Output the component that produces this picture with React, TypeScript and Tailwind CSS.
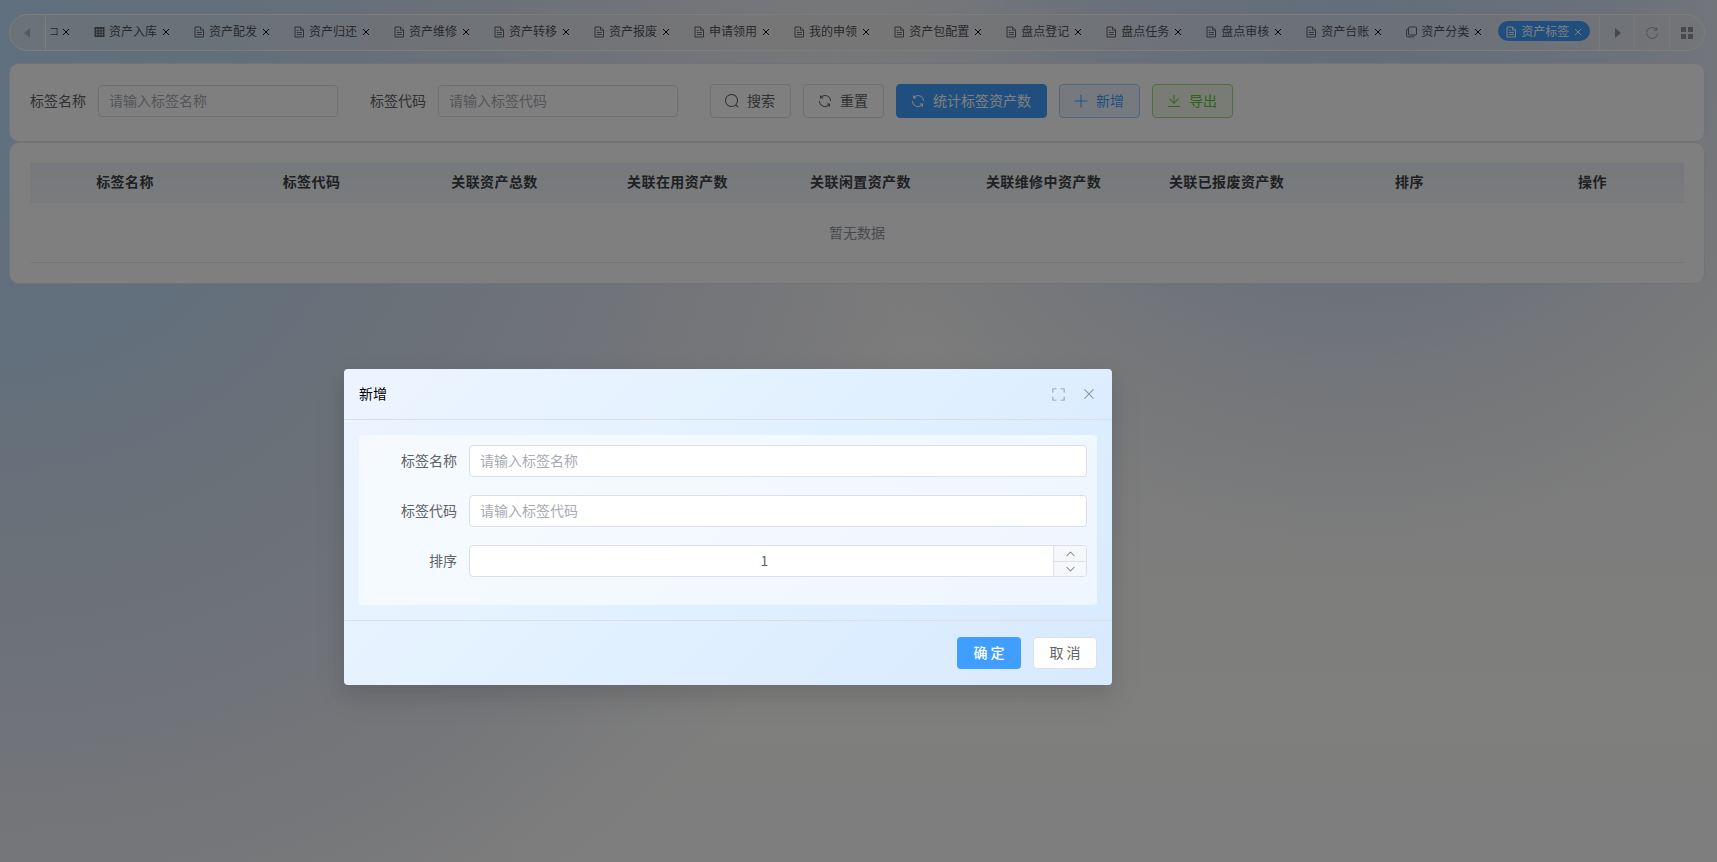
import React from "react";

type IconProps = { d: string[]; className?: string };
const Icon = ({ d, className = "" }: IconProps) => (
  <svg viewBox="0 0 1024 1024" fill="currentColor" className={`shrink-0 ${className}`}>
    {d.map((p) => (
      <path key={p} d={p} />
    ))}
  </svg>
);

const REFRESH = [
  "M784.512 230.272v-50.56a32 32 0 1 1 64 0v149.056a32 32 0 0 1-32 32H667.52a32 32 0 1 1 0-64h92.992A320 320 0 1 0 524.8 833.152a320 320 0 0 0 320-320h64a384 384 0 0 1-384 384 384 384 0 0 1-384-384 384 384 0 0 1 643.712-282.88z",
];
const SWITCH = [
  "M771.776 794.88A384 384 0 0 1 128 512h64a320 320 0 0 0 555.712 216.448H654.72a32 32 0 1 1 0-64h149.056a32 32 0 0 1 32 32v148.928a32 32 0 1 1-64 0v-50.56zM276.288 295.616h92.992a32 32 0 0 1 0 64H220.16a32 32 0 0 1-32-32V178.56a32 32 0 0 1 64 0v50.56A384 384 0 0 1 896.128 512h-64a320 320 0 0 0-555.776-216.384z",
];
const SEARCH = [
  "m795.904 750.72 124.992 124.928a32 32 0 0 1-45.248 45.248L750.656 795.904a416 416 0 1 1 45.248-45.248zM480 832a352 352 0 1 0 0-704 352 352 0 0 0 0 704z",
];
const PLUS = [
  "M480 480V128a32 32 0 0 1 64 0v352h352a32 32 0 1 1 0 64H544v352a32 32 0 1 1-64 0V544H128a32 32 0 0 1 0-64h352z",
];
const DOWNLOAD = [
  "M160 832h704a32 32 0 1 1 0 64H160a32 32 0 1 1 0-64zm384-253.696 236.288-236.352 45.248 45.248L508.8 704 192 387.2l45.248-45.248L480 584.704V128h64v450.304z",
];
const CLOSE = [
  "M764.288 214.592 512 466.88 259.712 214.592a31.936 31.936 0 0 0-45.12 45.12L466.752 512 214.528 764.224a31.936 31.936 0 1 0 45.12 45.184L512 557.184l252.288 252.288a31.936 31.936 0 0 0 45.12-45.12L557.12 512.064l252.288-252.352a31.936 31.936 0 1 0-45.12-45.184z",
];
const FULL = [
  "m160 96.064 192 .192a32 32 0 0 1 0 64l-192-.192V352a32 32 0 0 1-64 0V96h64v.064zm0 831.872V928H96V672a32 32 0 1 1 64 0v191.936l192-.192a32 32 0 1 1 0 64l-192 .192zM864 96.064V96h64v256a32 32 0 1 1-64 0V160.064l-192 .192a32 32 0 1 1 0-64l192-.192zm0 831.872-192-.192a32 32 0 0 1 0-64l192 .192V672a32 32 0 1 1 64 0v256h-64v-.064z",
];
const UP = [
  "m488.832 344.32-339.84 356.672a32 32 0 0 0 0 44.16l.384.384a29.44 29.44 0 0 0 42.688 0l320-335.872 319.872 335.872a29.44 29.44 0 0 0 42.688 0l.384-.384a32 32 0 0 0 0-44.16L535.168 344.32a32 32 0 0 0-46.336 0z",
];

const DocIcon = () => (
  <svg viewBox="0 0 11 12" className="mt-[2px] h-3 w-[11px] shrink-0" fill="none" stroke="currentColor">
    <path d="M1 1H6.5L9.5 4V11H1Z" />
    <path d="M6.5 1V4.2H9.5M2.8 4.5H4.5M2.8 6.5H8M2.8 8.5H8" strokeWidth=".9" />
  </svg>
);
const GridIcon = () => (
  <svg viewBox="0 0 11 12" className="mt-px h-3 w-[11px] shrink-0" fill="currentColor">
    <path
      fillRule="evenodd"
      d="M.5 1h10v10H.5zM2 3v1.3h1.6V3zM4.8 3v1.3h1.6V3zM7.5 3v1.3h1.6V3zM2 5.5v1.3h1.6V5.5zM4.8 5.5v1.3h1.6V5.5zM7.5 5.5v1.3h1.6V5.5zM2 8v1.3h1.6V8zM4.8 8v1.3h1.6V8zM7.5 8v1.3h1.6V8z"
    />
  </svg>
);
const CopyIcon = () => (
  <svg viewBox="0 0 11 12" className="mt-px h-3 w-[11px] shrink-0" fill="none" stroke="currentColor">
    <rect x="2.5" y="1" width="8" height="8" rx="1" />
    <path d="M2.2 3Q.6 3 .6 4V9.8Q.6 10.9 1.6 10.9H7Q8.2 10.9 8.2 9.4" />
  </svg>
);
const TabClose = () => (
  <svg viewBox="0 0 8 8" className="mt-px ml-[5px] h-2 w-2 shrink-0" stroke="currentColor" strokeWidth="1">
    <path d="M1 1l6 6M7 1L1 7" />
  </svg>
);

const tabs: { label: string; icon?: "grid" | "copy"; active?: boolean }[] = [
  { label: "资产入库", icon: "grid" },
  { label: "资产配发" },
  { label: "资产归还" },
  { label: "资产维修" },
  { label: "资产转移" },
  { label: "资产报废" },
  { label: "申请领用" },
  { label: "我的申领" },
  { label: "资产包配置" },
  { label: "盘点登记" },
  { label: "盘点任务" },
  { label: "盘点审核" },
  { label: "资产台账" },
  { label: "资产分类", icon: "copy" },
  { label: "资产标签", active: true },
];

const columns = ["标签名称", "标签代码", "关联资产总数", "关联在用资产数", "关联闲置资产数", "关联维修中资产数", "关联已报废资产数", "排序", "操作"];

const TabBar = () => (
  <div className="flex h-[37px] overflow-hidden rounded-full border border-[#fffaf3] bg-[#f0ece8]/40 text-[12px] text-[#505358]">
    <div className="flex w-[36px] shrink-0 items-center justify-center border-r border-[#fffaf3] pr-[1px] text-[#b0b2b8]">
      <svg viewBox="0 0 6 10" className="h-[10px] w-[6px]" fill="currentColor">
        <path d="M6 0v10L0 5z" />
      </svg>
    </div>
    <div className="flex min-w-0 flex-1 items-center gap-2 pb-[3px]">
      <div className="flex h-5 w-8 shrink-0 items-center pl-[3px]">
        <span className="w-[9px] text-[10px]">コ</span>
        <span className="ml-[-1px] text-black">
          <TabClose />
        </span>
      </div>
      {tabs.map((t) => (
        <div
          key={t.label}
          className={`flex h-5 shrink-0 items-center rounded-full px-2 ${t.active ? "bg-[#409eff] text-white" : ""}`}
        >
          <span className={t.active ? "text-white" : "text-[#606266]"}>
            {t.icon === "grid" ? <GridIcon /> : t.icon === "copy" ? <CopyIcon /> : <DocIcon />}
          </span>
          <span className="ml-1 pr-px whitespace-nowrap">
            <span className="-mr-px">{t.label}</span>
          </span>
          <span className={t.active ? "text-white" : "text-black"}>
            <TabClose />
          </span>
        </div>
      ))}
    </div>
    <div className="flex w-[35px] shrink-0 items-center justify-center border-l border-[#fffaf3]/60 pl-[2px] text-[#909399]">
      <svg viewBox="0 0 6 10" className="h-[10px] w-[6px]" fill="currentColor">
        <path d="M0 0v10l6-5z" />
      </svg>
    </div>
    <div className="flex w-[35px] shrink-0 items-center justify-center border-l border-[#fffaf3]/60 text-[#a5a7ac]">
      <Icon d={REFRESH} className="h-4 w-4" />
    </div>
    <div className="flex w-[35px] shrink-0 items-center justify-center border-l border-[#fffaf3]/60 text-[#909399]">
      <svg viewBox="0 0 12 12" className="h-3 w-3" fill="currentColor">
        <path d="M0 0h5v5H0zM7 0h5v5H7zM0 7h5v5H0zM7 7h5v5H7z" />
      </svg>
    </div>
  </div>
);

const Button = ({ icon, children, tone }: { icon: string[]; children: React.ReactNode; tone: string }) => (
  <button className={`flex h-[34px] items-center gap-[7px] rounded border pr-[15px] pl-[13px] ${tone}`}>
    <Icon d={icon} className="h-4 w-4" />
    <span className="pb-[2px] whitespace-nowrap">{children}</span>
  </button>
);

const FilterField = ({ label, placeholder }: { label: string; placeholder: string }) => (
  <div className="mr-8 flex items-center gap-3">
    <span className="pb-[2px] text-[#606266]">{label}</span>
    <div className="flex h-8 w-[240px] items-center rounded border border-[#dcdfe6] px-[10px] pb-[2px] text-[#a8abb2]">{placeholder}</div>
  </div>
);

const FormRow = ({ label, children }: { label: string; children: React.ReactNode }) => (
  <div className="flex h-8 items-center">
    <span className="w-[100px] shrink-0 pr-3 pb-[2px] text-right text-[#606266]">{label}</span>
    {children}
  </div>
);

export default function App() {
  return (
    <div className="relative h-[862px] w-[1717px] overflow-hidden bg-[radial-gradient(circle_560px_at_1350px_0px,#c6dcf8_0%,#ccdef6f0_30%,#d6e2f4e0_52%,#e4e9f1a0_75%,#f6f6f600_100%),radial-gradient(circle_960px_at_0px_100px,#c2e0fe_0%,#c4dff8_26%,#d2e1f3_42%,#e0e6f2_65%,#ebedf3_80%,#f6f6f600_100%),linear-gradient(180deg,#f8f6f6_0%,#f9f9f9_50%,#fefefc_80%,#fdfdfd_100%)] font-['Noto_Sans_CJK_SC',sans-serif] text-[14px] leading-[22px]">
      <div className="flex flex-col pr-3 pl-[9px] pt-[14px]">
        <TabBar />
        <div className="mt-3 flex h-[79px] rounded-[10px] border border-[#e4e7ed] bg-white px-5 pt-5">
          <div className="flex h-[34px] items-center">
            <FilterField label="标签名称" placeholder="请输入标签名称" />
            <FilterField label="标签代码" placeholder="请输入标签代码" />
            <div className="flex gap-3">
              <Button icon={SEARCH} tone="border-[#dcdfe6] text-[#606266]">搜索</Button>
              <Button icon={SWITCH} tone="border-[#dcdfe6] text-[#606266]">重置</Button>
              <Button icon={SWITCH} tone="border-[#409eff] bg-[#409eff] text-white">统计标签资产数</Button>
              <Button icon={PLUS} tone="border-[#a0cfff] bg-[#ecf5ff] text-[#409eff]">新增</Button>
              <Button icon={DOWNLOAD} tone="border-[#a4da89] bg-[#f0f9eb] text-[#67c23a]">导出</Button>
            </div>
          </div>
        </div>
        <div className="h-[142px] rounded-[10px] border border-[#e4e7ed] bg-white px-5 pt-5">
          <div className="grid h-10 grid-cols-[190px_repeat(8,minmax(0,1fr))] items-center border-b border-[#ebeef5] bg-linear-to-b from-[#ecf2fa] to-[#f4f7fa] text-center font-bold tracking-[0.4px] text-[#3f4145]">
            {columns.map((c) => (
              <span key={c} className="pb-[4px]">{c}</span>
            ))}
          </div>
          <div className="flex h-[60px] items-center justify-center border-b border-[#ebeef5] pb-[2px] text-[#909399]">暂无数据</div>
        </div>
      </div>

      <div className="absolute inset-0 bg-black/50">
        <div className="absolute top-[369px] left-[344px] flex h-[316px] w-[768px] flex-col rounded bg-linear-[135deg,#ecf4ff_0%,#e4f2ff_40%,#deeeff_65%,#d8eaff_100%] shadow-[0_12px_32px_4px_rgba(0,0,0,0.06),0_8px_20px_rgba(0,0,0,0.08)]">
          <div className="flex h-[51px] shrink-0 items-center border-b border-[#dcdfe6] px-[15px]">
            <span className="flex-1 pb-[2px] text-black">新增</span>
            <div className="flex items-center gap-[15px] text-[#909399]">
              <Icon d={FULL} className="h-[15px] w-[15px]" />
              <Icon d={CLOSE} className="h-4 w-4" />
            </div>
          </div>
          <div className="flex-1 p-[15px]">
            <div className="flex h-[170px] flex-col gap-[18px] rounded bg-white/55 p-[10px]">
              <FormRow label="标签名称">
                <div className="flex h-8 flex-1 items-center rounded border border-[#dcdfe6] bg-white px-[10px] pb-[2px] text-[#a8abb2]">请输入标签名称</div>
              </FormRow>
              <FormRow label="标签代码">
                <div className="flex h-8 flex-1 items-center rounded border border-[#dcdfe6] bg-white px-[10px] pb-[2px] text-[#a8abb2]">请输入标签代码</div>
              </FormRow>
              <FormRow label="排序">
                <div className="flex h-8 flex-1 overflow-hidden rounded border border-[#dcdfe6] bg-white">
                  <div className="flex flex-1 items-center justify-center pb-[2px] pl-[6px] text-[#606266]">1</div>
                  <div className="flex w-[33px] flex-col border-l border-[#dcdfe6] bg-[#f5f7fa] text-[#606266]">
                    <div className="flex h-4 items-center justify-center border-b border-[#dcdfe6]">
                      <Icon d={UP} className="h-[11px] w-[11px]" />
                    </div>
                    <div className="flex flex-1 items-center justify-center">
                      <Icon d={UP} className="h-[11px] w-[11px] rotate-180" />
                    </div>
                  </div>
                </div>
              </FormRow>
            </div>
          </div>
          <div className="flex h-[65px] shrink-0 items-center justify-end gap-3 border-t border-[#dcdfe6] px-[15px]">
            <button className="h-8 w-16 rounded bg-[#409eff] pb-[2px] font-medium text-white">确 定</button>
            <button className="h-8 w-16 rounded border border-[#dcdfe6] bg-white pb-[2px] text-[#606266]">取 消</button>
          </div>
        </div>
      </div>
    </div>
  );
}
